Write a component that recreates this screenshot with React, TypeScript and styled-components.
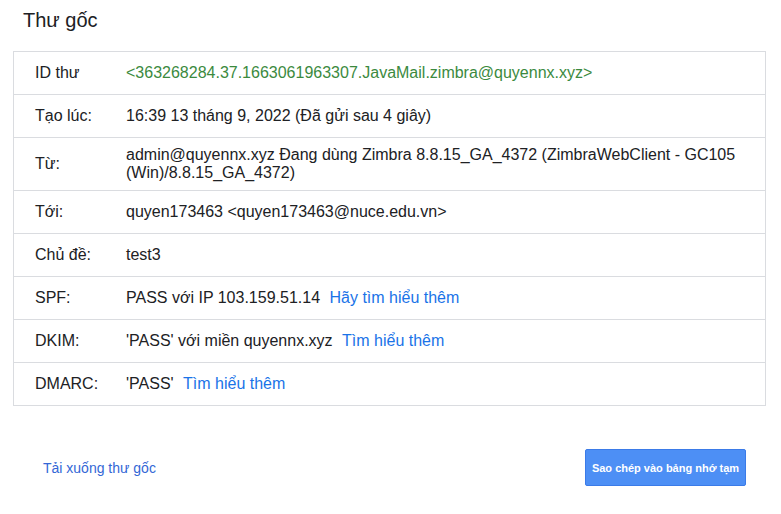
import React from "react";
import styled, { createGlobalStyle } from "styled-components";

const GlobalStyle = createGlobalStyle`
  html, body { margin: 0; padding: 0; background: #ffffff; }
  body { font-family: "Liberation Sans", Arial, sans-serif; color: #202124; }
  * { box-sizing: border-box; }
`;

const Page = styled.div`
  display: flex;
  flex-direction: column;
  padding: 8px 15px 0 13px;
`;

const Title = styled.h1`
  margin: 0 0 19px 10px;
  font-size: 20px;
  line-height: 24px;
  font-weight: 400;
  color: #202124;
`;

const Table = styled.div`
  display: flex;
  flex-direction: column;
  border: 1px solid #dadce0;
`;

const Row = styled.div`
  display: flex;
  align-items: center;
  min-height: 42px;
  padding: 8px 0;
  font-size: 16px;
  line-height: 18px;
  color: #202124;
  & + & { border-top: 1px solid #dadce0; min-height: 43px; }
`;

const Label = styled.div`
  flex: 0 0 112px;
  padding-left: 21px;
`;

const Value = styled.div<{ $green?: boolean }>`
  flex: 1;
  padding-right: 16px;
  color: ${(p) => (p.$green ? "#3b8a3e" : "#202124")};
`;

const Link = styled.a`
  color: #1a73e8;
  text-decoration: none;
  margin-left: 5px;
  cursor: pointer;
`;

const Footer = styled.div`
  display: flex;
  align-items: center;
  justify-content: space-between;
  margin-top: 43px;
  padding: 0 20px 0 30px;
`;

const DownloadLink = styled.a`
  font-size: 14px;
  color: #3367d6;
  text-decoration: none;
  cursor: pointer;
`;

const CopyButton = styled.button`
  width: 161px;
  height: 37px;
  padding: 0 4px;
  border: 1px solid #3b7be8;
  border-radius: 2px;
  background: #4d8ff5;
  color: #ffffff;
  font-family: "Liberation Sans", Arial, sans-serif;
  font-size: 11px;
  font-weight: 700;
  cursor: pointer;
`;

const rows: { label: string; value: React.ReactNode; green?: boolean }[] = [
  {
    label: "ID thư",
    value: "<363268284.37.1663061963307.JavaMail.zimbra@quyennx.xyz>",
    green: true,
  },
  { label: "Tạo lúc:", value: "16:39 13 tháng 9, 2022 (Đã gửi sau 4 giây)" },
  {
    label: "Từ:",
    value:
      "admin@quyennx.xyz Đang dùng Zimbra 8.8.15_GA_4372 (ZimbraWebClient - GC105 (Win)/8.8.15_GA_4372)",
  },
  { label: "Tới:", value: "quyen173463 <quyen173463@nuce.edu.vn>" },
  { label: "Chủ đề:", value: "test3" },
  {
    label: "SPF:",
    value: (
      <>
        PASS với IP 103.159.51.14 <Link>Hãy tìm hiểu thêm</Link>
      </>
    ),
  },
  {
    label: "DKIM:",
    value: (
      <>
        'PASS' với miền quyennx.xyz <Link>Tìm hiểu thêm</Link>
      </>
    ),
  },
  {
    label: "DMARC:",
    value: (
      <>
        'PASS' <Link>Tìm hiểu thêm</Link>
      </>
    ),
  },
];

export default function App() {
  return (
    <>
      <GlobalStyle />
      <Page>
        <Title>Thư gốc</Title>
        <Table>
          {rows.map((r) => (
            <Row key={r.label}>
              <Label>{r.label}</Label>
              <Value $green={r.green}>{r.value}</Value>
            </Row>
          ))}
        </Table>
        <Footer>
          <DownloadLink>Tải xuống thư gốc</DownloadLink>
          <CopyButton>Sao chép vào bảng nhớ tạm</CopyButton>
        </Footer>
      </Page>
    </>
  );
}
